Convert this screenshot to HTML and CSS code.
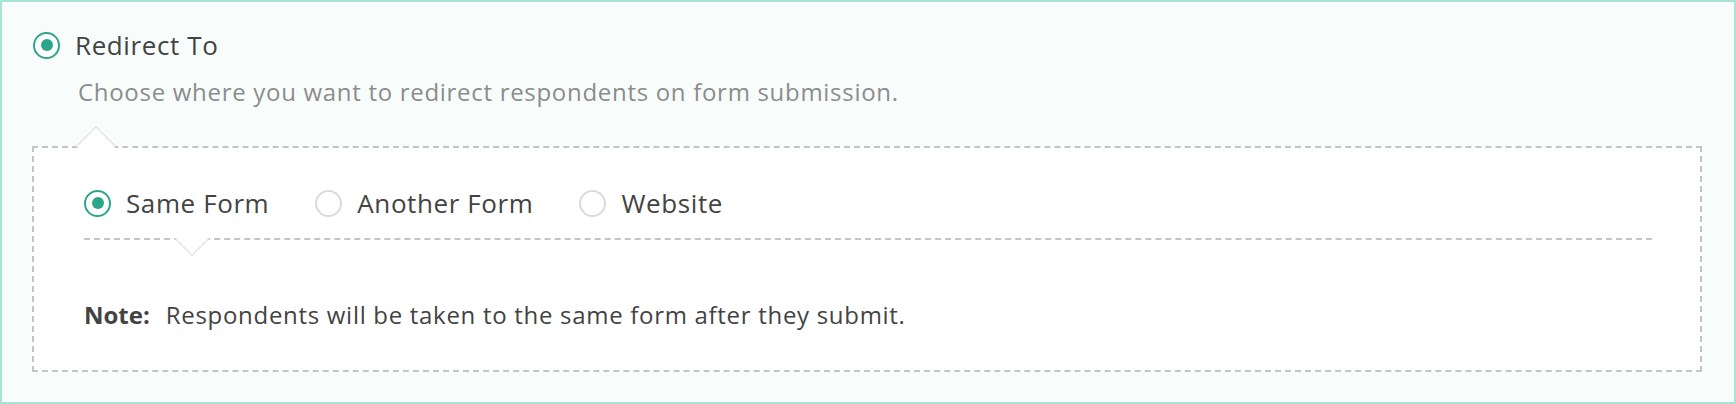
FILE: index.html
```html
<!DOCTYPE html>
<html lang="en">
<head>
    <meta charset="UTF-8">
    <meta name="viewport" content="width=device-width, initial-scale=1.0">
    <title>Redirect To</title>
    <link rel="stylesheet" href="styles.css">
</head>
<body>
    <div class="panel">
        <label class="option option-main">
            <span class="radio checked"></span>
            <span class="option-label">Redirect To</span>
        </label>
        <div class="description">Choose where you want to redirect respondents on form submission.</div>

        <div class="redirect-box">
            <span class="caret-up"></span>

            <div class="choices">
                <label class="option">
                    <span class="radio checked"></span>
                    <span class="option-label">Same Form</span>
                </label>
                <label class="option">
                    <span class="radio"></span>
                    <span class="option-label">Another Form</span>
                </label>
                <label class="option">
                    <span class="radio"></span>
                    <span class="option-label">Website</span>
                </label>
            </div>

            <div class="separator">
                <span class="caret-down"></span>
            </div>

            <div class="note">
                <strong>Note:</strong>
                <span>Respondents will be taken to the same form after they submit.</span>
            </div>
        </div>
    </div>
</body>
</html>
```

FILE: styles.css
```css
* {
    box-sizing: border-box;
}

body {
    margin: 0;
    font-family: "Open Sans", Arial, sans-serif;
    color: #434343;
    background: #fff;
}

.panel {
    height: 404px;
    border: 2px solid #a9e3d7;
    background: #f8fdfc;
    padding: 28px 32px 0 30px;
}

.option {
    display: flex;
    align-items: center;
    height: 30px;
    cursor: pointer;
}

.option-main {
    padding-left: 1px;
}

.radio {
    width: 27px;
    height: 27px;
    border: 2px solid #dadada;
    border-radius: 50%;
    background: #fff;
    display: flex;
    align-items: center;
    justify-content: center;
    flex-shrink: 0;
}

.radio.checked {
    border-color: #2ba68b;
}

.radio.checked::after {
    content: "";
    width: 12px;
    height: 12px;
    border-radius: 50%;
    background: #2ba68b;
}

.option-label {
    margin-left: 15px;
    font-size: 26px;
    letter-spacing: 0.6px;
    white-space: nowrap;
}

.description {
    margin-top: 17px;
    margin-left: 46px;
    height: 30px;
    line-height: 30px;
    font-size: 24px;
    letter-spacing: 0.7px;
    color: #8c8c8c;
}

.redirect-box {
    position: relative;
    margin-top: 39px;
    height: 226px;
    background: #fff;
    border: 2px dashed #c4c4c4;
    padding: 40px 48px 0 50px;
}

.caret-up {
    position: absolute;
    top: -16px;
    left: 48px;
    width: 28px;
    height: 28px;
    background: #fff;
    border-top: 1px solid #dcdcdc;
    border-left: 1px solid #dcdcdc;
    transform: rotate(45deg);
}

.choices {
    display: flex;
    gap: 46px;
}

.separator {
    position: relative;
    margin-top: 20px;
    border-top: 2px dashed #c4c4c4;
}

.caret-down {
    position: absolute;
    top: -13px;
    left: 96px;
    width: 24px;
    height: 24px;
    background: #fff;
    border-right: 1px solid #dcdcdc;
    border-bottom: 1px solid #dcdcdc;
    transform: rotate(45deg);
}

.note {
    margin-top: 60px;
    height: 30px;
    line-height: 30px;
    font-size: 24px;
    letter-spacing: 0.7px;
    white-space: nowrap;
}

.note strong {
    font-weight: 700;
    letter-spacing: 0;
    margin-right: 9px;
}
```
